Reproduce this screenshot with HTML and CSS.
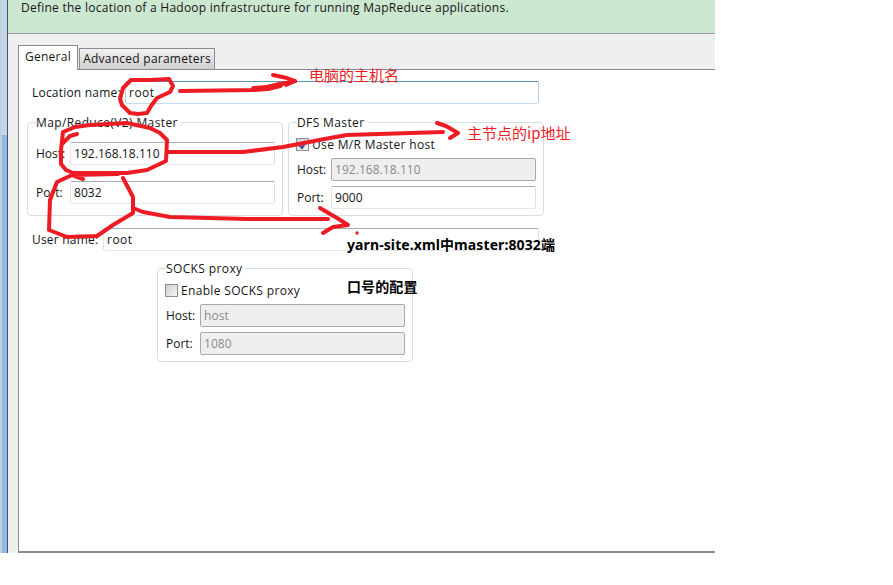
FILE: index.html
```html
<!DOCTYPE html>
<html lang="en">
<head>
<meta charset="utf-8">
<title>Hadoop location</title>
<link rel="stylesheet" href="styles.css">
</head>
<body>
<div class="window">
  <div class="strip"></div>
  <div class="main">
    <div class="banner">Define the location of a Hadoop infrastructure for running MapReduce applications.</div>
    <div class="tab-area">
      <div class="tabs">
        <div class="tab active">General</div>
        <div class="tab">Advanced parameters</div>
      </div>
      <div class="panel">
        <div class="row loc-row">
          <label class="row-label loc-label">Location name:</label>
          <input class="field focus loc-field word" value="root">
        </div>
        <div class="groups">
          <div class="group">
            <div class="legend">Map/Reduce(V2) Master</div>
            <div class="grid mr-grid">
              <label>Host:</label><input class="field" value="192.168.18.110">
              <label>Port:</label><input class="field" value="8032">
            </div>
          </div>
          <div class="group">
            <div class="legend">DFS Master</div>
            <div class="check-row">
              <span class="check">
                <svg class="tick" width="9" height="9" viewBox="0 0 9 9"><path d="M1 4l3 4 4-7" fill="none" stroke="#4a4f98" stroke-width="2.4"/></svg>
              </span>
              <span class="check-text">Use M/R Master host</span>
            </div>
            <div class="grid">
              <label>Host:</label><input class="field off" value="192.168.18.110" disabled>
              <label>Port:</label><input class="field" value="9000">
            </div>
          </div>
        </div>
        <div class="row user-row">
          <label class="row-label user-label">User name:</label>
          <input class="field user-field word" value="root">
        </div>
        <div class="group socks">
          <div class="legend">SOCKS proxy</div>
          <div class="check-row">
            <span class="check"></span>
            <span class="check-text">Enable SOCKS proxy</span>
          </div>
          <div class="grid">
            <label>Host:</label><input class="field off" value="host" disabled>
            <label>Port:</label><input class="field off" value="1080" disabled>
          </div>
        </div>
      </div>
    </div>
  </div>
</div>

<svg class="ink" width="893" height="585" viewBox="0 0 893 585">
  <g fill="none" stroke="#ed1c24" stroke-width="4" stroke-linecap="round" stroke-linejoin="round">
    <path d="M131 80L150 80 169 79 173 86 170 92 157 98 151 106 147 113 138 114 130 113 122 105 120 99 123 88 131 80"/>
    <path d="M180 91L253 90 267 87 295 81"/>
    <path d="M254 89L268 88 280 85" stroke-width="6"/>
    <path d="M273 75L287 78 295 81 286 85"/>
    <path d="M77 134L70 136 63 143M63 132L75 127 90 125 127 123 150 128 160 133 167 140 166 161 147 170 127 173 73 173 66 170 61 164 61 150 63 132"/>
    <path d="M168 152L243 152 283 147 330 138 347 135 443 132"/>
    <path d="M437 123L446 126 458 133 450 138"/>
    <path d="M83 179L72 175 57 182 50 200 49 230 67 237 97 236 113 225 133 213 133 197 123 178M72 175L118 174"/>
    <path d="M133 208L143 212 170 217 247 219 328 219"/>
    <path d="M320 208L337 218 348 225 333 227 323 233"/>
  </g>
  <circle cx="357" cy="233" r="1.7" fill="#ed1c24"/>
</svg>

<div class="note red note-host">电脑的主机名</div>
<div class="note red note-ip">主节点的ip地址</div>
<div class="note bold note-yarn">yarn-site.xml中master:8032端</div>
<div class="note bold note-port">口号的配置</div>
</body>
</html>
```
FILE: styles.css
```css
* { box-sizing: border-box; }
html, body { margin: 0; padding: 0; height: 100%; overflow: hidden; background: #fff; }
body {
  position: relative;
  font-family: "Open Sans", "Noto Sans", sans-serif;
  font-size: 12px;
  color: #151515;
}
.window { display: flex; width: 715px; height: 553px; }
.strip {
  width: 8px;
  border-left: 2px solid #c5cedb;
  border-right: 1px solid #44546a;
  background: linear-gradient(#c4d6ea 0, #c4d6ea 135px, #90bce4 135px, #90bce4 100%);
}
.main { flex: 1; display: flex; flex-direction: column; min-width: 0; }
.banner {
  height: 34px;
  background: #cde8d0;
  border-bottom: 1px solid #a0a0a0;
  padding-left: 13px;
  line-height: 15px;
  letter-spacing: .25px;
  white-space: nowrap;
}
.tab-area {
  flex: 1;
  display: flex;
  flex-direction: column;
  background: #efefef;
  padding-left: 10px;
  min-height: 0;
}
.tabs { display: flex; align-items: flex-end; height: 35px; }
.tab {
  position: relative;
  height: 21px;
  width: 136px;
  margin-left: 1px;
  border: 1px solid #8a8a95;
  border-bottom: none;
  background: linear-gradient(#f2f2f2, #cfcfcf);
  text-align: center;
  line-height: 20px;
  letter-spacing: .25px;
  white-space: nowrap;
}
.tab.active {
  z-index: 1;
  width: 60px;
  height: 25px;
  margin: 0 0 -1px;
  background: #fff;
  line-height: 22px;
}
.panel {
  flex: 1;
  background: #fff;
  border: solid #8a8a95;
  border-width: 1px 0 2px 1px;
  padding: 11px 0 0 8px;
}
.row { display: flex; align-items: center; margin-left: 5px; width: 507px; }
.row-label { white-space: nowrap; letter-spacing: .2px; }
.loc-label { width: 93px; }
.user-label { width: 71px; }
.loc-field, .user-field { flex: 1; min-width: 0; }
.field {
  height: 23px;
  width: 205px;
  padding: 0 3px;
  border: 1px solid;
  border-color: #abadb3 #dbdfe6 #e3e9ef #e2e3ea;
  border-radius: 2px;
  background: #fff;
  color: #151515;
  font: inherit;
  letter-spacing: .05px;
  outline: none;
}
.field.word { letter-spacing: .5px; }
.field.focus { border-color: #5c93bc #b5cfe7 #c5daed #b5cfe7; }
.field.off { background: #efefef; color: #8a8a8a; border-color: #a9a9a9; }
.groups { display: flex; gap: 5px; margin-top: 18px; }
.group {
  width: 256px;
  border: 1px solid #d5dfe5;
  border-radius: 4px;
  padding: 0 7px 6px 8px;
}
.legend {
  display: table;
  margin: -8px 0 0 0;
  padding: 0 3px 0 0;
  height: 17px;
  line-height: 16px;
  letter-spacing: .38px;
  background: #fff;
  white-space: nowrap;
}
.grid {
  display: grid;
  grid-template-columns: 34px 205px;
  row-gap: 5px;
  align-items: center;
  margin-top: 7px;
}
.mr-grid { row-gap: 16px; margin-top: 10px; padding-bottom: 0; }
.check-row { display: flex; align-items: center; gap: 3px; height: 13px; margin: 6px 0 0 -1px; }
.check-text { letter-spacing: .33px; }
.check {
  display: flex;
  align-items: center;
  justify-content: center;
  width: 13px;
  height: 13px;
  flex: none;
  border: 1px solid #8e8f8f;
  background: linear-gradient(135deg, #d0d0d0, #f4f4f4);
}
.user-row { margin-top: 12px; }
.socks { margin: 17px 0 0 130px; }
.ink { position: absolute; left: 0; top: 0; pointer-events: none; }
.note { position: absolute; white-space: nowrap; font-family: "Noto Sans", "Noto Sans CJK SC", sans-serif; }
.red { color: #ee1c25; font-size: 15px; line-height: 20px; font-family: "Noto Sans CJK SC", sans-serif; }
.bold { color: #000; font-size: 14px; font-weight: 700; line-height: 18px; letter-spacing: .1px; }
.note-host { left: 309px; top: 65px; }
.note-ip { left: 467px; top: 123px; }
.note-yarn { left: 347px; top: 236px; }
.note-port { left: 347px; top: 278px; }
```
